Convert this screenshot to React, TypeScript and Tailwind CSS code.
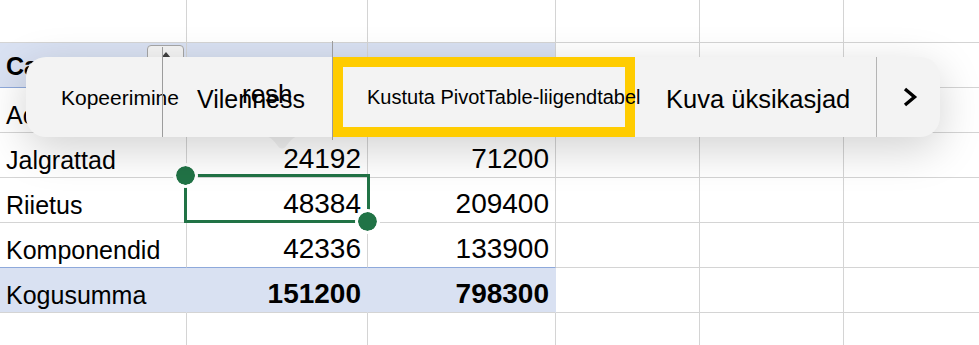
import React from "react";

const font = { fontFamily: '"Liberation Sans", Arial, sans-serif' };

type Cell = { text?: string; kind?: "label" | "num" | "bold" | "head"; band?: "head" | "total" | "preTotal" };

function GridCell({ w, c, last }: { w: string; c?: Cell; last?: boolean }) {
  const band = c?.band;
  let cls = `${w} shrink-0 h-full relative `;
  if (band === "head") cls += "bg-[#d9e1f2] border-b border-b-[#8ea9db] ";
  else if (band === "total") cls += "bg-[#d9e1f2] border-b border-b-[#d4d4d4] ";
  else if (band === "preTotal") cls += "border-b border-b-[#8ea9db] ";
  else cls += "border-b border-b-[#d4d4d4] ";
  if (!last) cls += band === "total" ? "border-r border-r-[#d9e1f2] " : "border-r border-r-[#d4d4d4] ";
  else cls += "flex-1 ";
  let inner: React.ReactNode = null;
  if (c?.text) {
    if (c.kind === "label")
      inner = <div className="pl-[6px] pt-[15px] text-[25px] leading-[25px] text-black whitespace-nowrap">{c.text}</div>;
    else if (c.kind === "head")
      inner = <div className="pl-[6px] pt-[11px] text-[25px] leading-[25px] font-bold text-black whitespace-nowrap">{c.text}</div>;
    else if (c.kind === "num")
      inner = <div className="pr-[6px] pt-[12px] text-right text-[28px] leading-[28px] text-black">{c.text}</div>;
    else
      inner = <div className="pr-[6px] pt-[12px] text-right text-[28px] leading-[28px] font-bold text-black">{c.text}</div>;
  }
  return <div className={cls}>{inner}</div>;
}

const widths = ["w-[187px]", "w-[181px]", "w-[188px]", "w-[144px]", "w-[144px]", ""];

function Row({ h, cells }: { h: string; cells: (Cell | undefined)[] }) {
  return (
    <div className={`flex ${h} shrink-0`}>
      {widths.map((w, i) => (
        <GridCell key={i} w={w} c={cells[i]} last={i === widths.length - 1} />
      ))}
    </div>
  );
}

export default function App() {
  return (
    <div className="relative w-[979px] h-[345px] overflow-hidden bg-white" style={font}>
      {/* grid */}
      <div className="flex flex-col h-full">
        <Row h="h-[43px]" cells={[]} />
        <div className="relative">
          <Row
            h="h-[45px]"
            cells={[
              { text: "Category", kind: "head", band: "head" },
              { band: "head" },
              { band: "head" },
            ]}
          />
          {/* filter button in header cell */}
          <div className="absolute left-[147px] top-[2px] w-[37px] h-[30px] rounded-[4px] border border-[#a6a6a6] bg-[#f4f4f4] flex justify-center pt-[6px]">
            <div className="w-0 h-0 border-l-[5px] border-r-[5px] border-b-[6px] border-l-transparent border-r-transparent border-b-[#404040]" />
          </div>
        </div>
        <Row h="h-[45px]" cells={[{ text: "Accessories", kind: "label" }]} />
        <Row
          h="h-[45px]"
          cells={[
            { text: "Jalgrattad", kind: "label" },
            { text: "24192", kind: "num" },
            { text: "71200", kind: "num" },
          ]}
        />
        <Row
          h="h-[45px]"
          cells={[
            { text: "Riietus", kind: "label" },
            { text: "48384", kind: "num" },
            { text: "209400", kind: "num" },
          ]}
        />
        <Row
          h="h-[45px]"
          cells={[
            { text: "Komponendid", kind: "label", band: "preTotal" },
            { text: "42336", kind: "num", band: "preTotal" },
            { text: "133900", kind: "num", band: "preTotal" },
          ]}
        />
        <Row
          h="h-[45px]"
          cells={[
            { text: "Kogusumma", kind: "label", band: "total" },
            { text: "151200", kind: "bold", band: "total" },
            { text: "798300", kind: "bold", band: "total" },
          ]}
        />
        <Row h="h-[40px]" cells={[]} />
      </div>

      {/* selection */}
      <div className="absolute left-[184px] top-[174px] w-[186px] h-[49px] border-[3px] border-[#217346]" />
      <div className="absolute left-[176px] top-[166px] w-[19px] h-[19px] rounded-full bg-[#217346] outline outline-[3px] outline-white" />
      <div className="absolute left-[358px] top-[212px] w-[19px] h-[19px] rounded-full bg-[#217346] outline outline-[3px] outline-white" />

      {/* context menu tail */}
      <svg className="absolute left-[258px] top-[135px]" width="48" height="18" viewBox="0 0 48 18">
        <path d="M0 0 C10 0 14 3 19 10 Q24 17 29 10 C34 3 38 0 48 0 Z" fill="#f3f3f3" />
      </svg>

      {/* context menu */}
      <div className="absolute left-[26px] top-[57px] w-[914px] h-[80px] rounded-[20px] bg-[#f3f3f3] shadow-[0_12px_44px_rgba(0,0,0,0.18)] flex text-black">
        <div className="w-[136px] shrink-0 pl-[35px] flex items-center pt-[2px]">
          <span className="text-[21px] whitespace-nowrap">Kopeerimine</span>
        </div>
        <div className="w-px shrink-0 self-start -mt-[10px] h-[90px] bg-[#9c9c9c]" />
        <div className="w-[169px] shrink-0 pl-[34px] flex items-center pt-[6px]">
          <div className="relative text-[25px] whitespace-nowrap">
            Vilenness
            <span className="absolute left-[45px] -top-[6px] text-[26px]">resh</span>
          </div>
        </div>
        <div className="w-px shrink-0 self-start -mt-[16px] h-[99px] bg-[#9c9c9c]" />
        <div className="w-[302px] shrink-0 border-[10px] border-[#ffcc00] pl-[24px] flex items-center">
          <span className="text-[20px] whitespace-nowrap">Kustuta PivotTable-liigendtabel</span>
        </div>
        <div className="w-[241px] shrink-0 pl-[31px] flex items-center pt-[4px]">
          <span className="text-[25.5px] whitespace-nowrap">Kuva üksikasjad</span>
        </div>
        <div className="w-px shrink-0 bg-[#b4b4b4]" />
        <div className="flex-1 flex items-center pl-[25px]">
          <svg width="16" height="22" viewBox="0 0 16 22">
            <path d="M3 3 L12.5 11 L3 19" fill="none" stroke="#000" strokeWidth="3.4" />
          </svg>
        </div>
      </div>
    </div>
  );
}
